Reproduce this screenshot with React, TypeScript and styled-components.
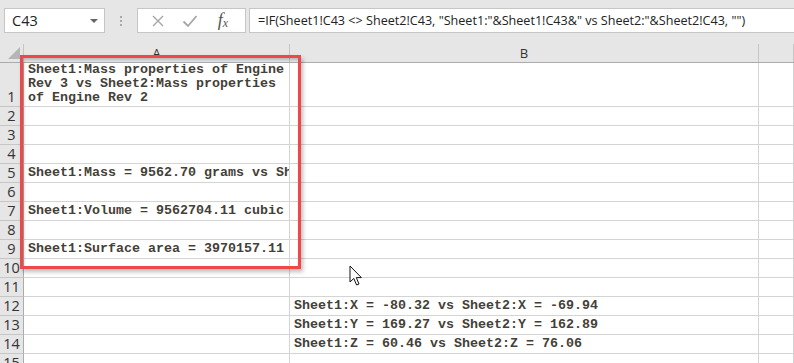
import styled, { createGlobalStyle } from 'styled-components';

const GlobalStyle = createGlobalStyle`
  html, body {
    margin: 0;
    padding: 0;
    background: #ffffff;
  }
  body {
    font-family: "Open Sans", "Noto Sans", sans-serif;
  }
`;

const COLS = '24px 266px 469px 1fr';

type RowData = { n: number; h: number; a?: string; b?: string };

const rows: RowData[] = [
  { n: 1, h: 44, a: 'Sheet1:Mass properties of Engine Rev 3 vs Sheet2:Mass properties of Engine Rev 2' },
  { n: 2, h: 19 },
  { n: 3, h: 19 },
  { n: 4, h: 19 },
  { n: 5, h: 19, a: 'Sheet1:Mass = 9562.70 grams vs Sh' },
  { n: 6, h: 19 },
  { n: 7, h: 19, a: 'Sheet1:Volume = 9562704.11 cubic' },
  { n: 8, h: 19 },
  { n: 9, h: 19, a: 'Sheet1:Surface area = 3970157.11' },
  { n: 10, h: 19 },
  { n: 11, h: 19 },
  { n: 12, h: 19, b: 'Sheet1:X = -80.32 vs Sheet2:X = -69.94' },
  { n: 13, h: 19, b: 'Sheet1:Y = 169.27 vs Sheet2:Y = 162.89' },
  { n: 14, h: 19, b: 'Sheet1:Z = 60.46 vs Sheet2:Z = 76.06' },
  { n: 15, h: 19 },
];

const App = () => {
  return (
    <Page>
      <GlobalStyle />
      <FormulaBar>
        <NameBox>
          <span>C43</span>
          <Caret />
        </NameBox>
        <Grip>
          <i />
          <i />
          <i />
        </Grip>
        <FxBox>
          <FxButton>
            <svg width="14" height="14" viewBox="0 0 14 14">
              <path d="M2 2 L12 12 M12 2 L2 12" stroke="#a6a6a6" strokeWidth="1.4" fill="none" />
            </svg>
          </FxButton>
          <FxButton>
            <svg width="16" height="14" viewBox="0 0 16 14">
              <path d="M1.5 7.5 L6 12 L14.5 2" stroke="#a6a6a6" strokeWidth="1.8" fill="none" />
            </svg>
          </FxButton>
          <FxLabel>
            f<sub>x</sub>
          </FxLabel>
        </FxBox>
        <FormulaInput>
          =IF(Sheet1!C43 &lt;&gt; Sheet2!C43, "Sheet1:"&amp;Sheet1!C43&amp;" vs Sheet2:"&amp;Sheet2!C43, "")
        </FormulaInput>
      </FormulaBar>

      <SheetWrap>
        <HeaderRow>
          <Corner />
          <ColHead>A</ColHead>
          <ColHead>B</ColHead>
          <ColHead />
        </HeaderRow>
        {rows.map((r) => (
          <Row key={r.n} $h={r.h}>
            <RowHead>{r.n}</RowHead>
            <Cell $wrap={r.n === 1}>{r.a}</Cell>
            <Cell>{r.b}</Cell>
            <Cell />
          </Row>
        ))}
        <Highlight />
        <Pointer>
          <svg width="14" height="22" viewBox="0 0 14 22">
            <path
              d="M1 1 L1 17 L4.8 13.4 L7.6 20 L10 19 L7.3 12.6 L12.4 12.6 Z"
              fill="#ffffff"
              stroke="#111111"
              strokeWidth="1"
              strokeLinejoin="round"
            />
          </svg>
        </Pointer>
      </SheetWrap>
    </Page>
  );
};

export default App;

const Page = styled.div`
  width: 794px;
  height: 363px;
  overflow: hidden;
  background: #e6e6e6;
`;

const FormulaBar = styled.div`
  height: 44px;
  box-sizing: border-box;
  padding: 8px 0 0 4px;
  display: flex;
  align-items: flex-start;
  background: #e6e6e6;
`;

const NameBox = styled.div`
  width: 101px;
  height: 25px;
  box-sizing: border-box;
  background: #fff;
  border: 1px solid #c6c6c6;
  display: flex;
  align-items: center;
  justify-content: space-between;
  padding: 0 6px 0 7px;
  font-size: 14.5px;
  color: #222;
`;

const Caret = styled.div`
  width: 0;
  height: 0;
  border-left: 4px solid transparent;
  border-right: 4px solid transparent;
  border-top: 4px solid #666;
`;

const Grip = styled.div`
  width: 32px;
  height: 25px;
  display: flex;
  flex-direction: column;
  align-items: center;
  justify-content: center;
  gap: 2px;

  i {
    display: block;
    width: 2px;
    height: 2px;
    background: #a8a8a8;
  }
`;

const FxBox = styled.div`
  width: 109px;
  height: 25px;
  box-sizing: border-box;
  background: #fff;
  border: 1px solid #c6c6c6;
  display: flex;
  align-items: center;
  justify-content: space-around;
  padding: 0 6px 0 4px;
`;

const FxButton = styled.div`
  width: 30px;
  display: flex;
  justify-content: center;
  align-items: center;
`;

const FxLabel = styled.div`
  width: 30px;
  text-align: center;
  font-family: "Liberation Serif", serif;
  font-style: italic;
  font-size: 18px;
  line-height: 20px;
  color: #555;

  sub {
    font-size: 12px;
    vertical-align: baseline;
    position: relative;
    top: 1px;
  }
`;

const FormulaInput = styled.div`
  margin-left: 3px;
  flex: 1;
  height: 25px;
  box-sizing: border-box;
  background: #fff;
  border: 1px solid #c6c6c6;
  border-right: none;
  padding-left: 8px;
  font-size: 12.6px;
  line-height: 23px;
  color: #222;
  white-space: nowrap;
  overflow: hidden;
`;

const SheetWrap = styled.div`
  position: relative;
`;

const HeaderRow = styled.div`
  display: grid;
  grid-template-columns: ${COLS};
  height: 19px;
  border-bottom: 1px solid #ababab;
  box-sizing: border-box;
  background: #e6e6e6;
`;

const Corner = styled.div`
  position: relative;
  border-right: 1px solid #c6c6c6;

  &::after {
    content: '';
    position: absolute;
    right: 3px;
    bottom: 3px;
    width: 0;
    height: 0;
    border-left: 12px solid transparent;
    border-bottom: 12px solid #b5b5b5;
  }
`;

const ColHead = styled.div`
  border-right: 1px solid #c6c6c6;
  display: flex;
  align-items: center;
  justify-content: center;
  font-size: 13px;
  color: #333;
`;

const Row = styled.div<{ $h: number }>`
  display: grid;
  grid-template-columns: ${COLS};
  height: ${(p) => p.$h}px;
`;

const RowHead = styled.div`
  background: #e6e6e6;
  border-right: 1px solid #ababab;
  border-bottom: 1px solid #c6c6c6;
  display: flex;
  align-items: flex-end;
  justify-content: center;
  font-size: 14.5px;
  line-height: 18px;
  color: #333;
`;

const Cell = styled.div<{ $wrap?: boolean }>`
  background: #fff;
  border-right: 1px solid #d4d4d4;
  border-bottom: 1px solid #d4d4d4;
  display: flex;
  align-items: flex-end;
  padding: 0 3px ${(p) => (p.$wrap ? 1 : 2)}px 4px;
  overflow: hidden;
  font-family: "Liberation Mono", monospace;
  font-weight: bold;
  font-size: 13.33px;
  line-height: 14px;
  color: #443f38;
  white-space: ${(p) => (p.$wrap ? 'normal' : 'nowrap')};
  min-width: 0;
`;

const Highlight = styled.div`
  position: absolute;
  left: 20px;
  top: 11px;
  width: 281px;
  height: 214px;
  box-sizing: border-box;
  border: 3px solid #f04848;
  box-shadow: 2px 3px 4px rgba(0, 0, 0, 0.25), inset 1px 2px 3px rgba(0, 0, 0, 0.2);
  pointer-events: none;
`;

const Pointer = styled.div`
  position: absolute;
  left: 349px;
  top: 221px;
  line-height: 0;
`;
